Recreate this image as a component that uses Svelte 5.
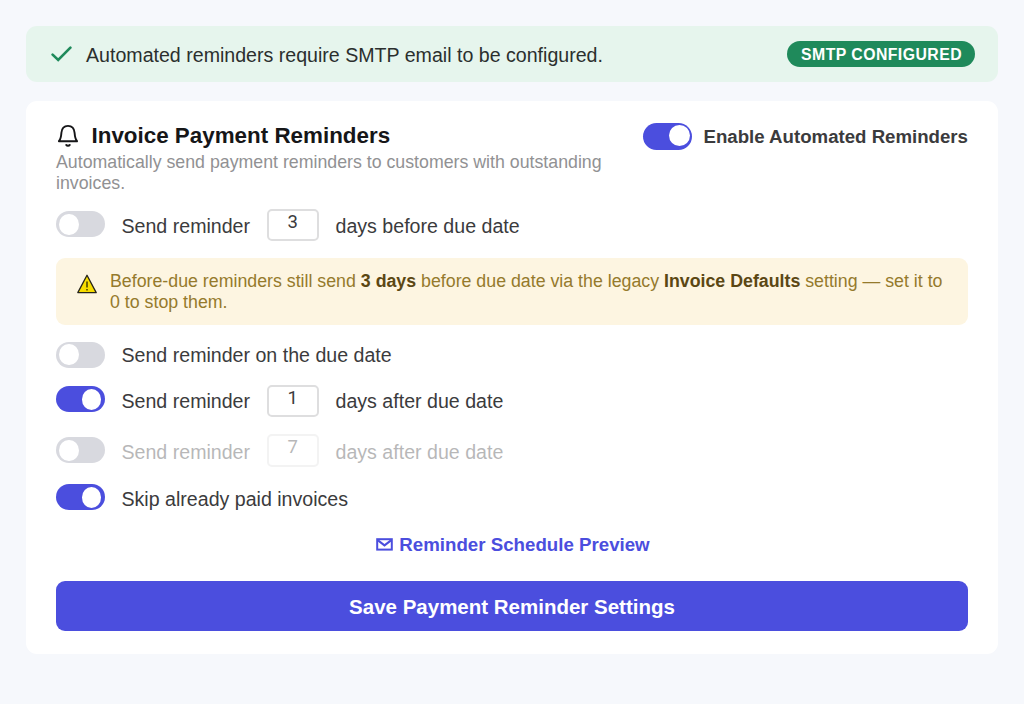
<script lang="ts">
    let rules = $state([
        { id: "before", on: false, label: "Send reminder", days: 3, suffix: "days before due date", muted: false },
        { id: "due", on: false, label: "Send reminder on the due date", days: null, suffix: "", muted: false },
        { id: "after-first", on: true, label: "Send reminder", days: 1, suffix: "days after due date", muted: false },
        { id: "after-second", on: false, label: "Send reminder", days: 7, suffix: "days after due date", muted: true },
        { id: "skip", on: true, label: "Skip already paid invoices", days: null, suffix: "", muted: false }
    ]);

    let enabled = $state(true);
</script>

<main>
    <div class="banner">
        <svg class="check" viewBox="0 0 22 16" width="22" height="16">
            <path d="M1.6 8.6 L7.2 14 L19.4 1.7" fill="none" stroke="#1f8a5b" stroke-width="2.6" stroke-linecap="round" />
        </svg>
        <span class="banner-text">Automated reminders require SMTP email to be configured.</span>
        <span class="badge">SMTP CONFIGURED</span>
    </div>

    <section class="card">
        <header>
            <div class="heading">
                <h1>
                    <svg viewBox="0 0 24 24" width="24" height="24" fill="none" stroke="#161618" stroke-width="1.9" stroke-linejoin="round" stroke-linecap="round">
                        <path d="M2.9 17.2 C5 14.8 5.1 12.8 5.4 8.8 C5.8 4 8 1.9 12 1.9 C16 1.9 18.2 4 18.6 8.8 C18.9 12.8 19 14.8 21.1 17.2 Z" />
                        <path d="M10.2 20.9 C11 22 13 22 13.8 20.9" />
                    </svg>
                    Invoice Payment Reminders
                </h1>
                <p>Automatically send payment reminders to customers with outstanding invoices.</p>
            </div>
            <div class="master">
                <button class="toggle" class:on={enabled} aria-label="Enable" onclick={() => {enabled = !enabled}}><i></i></button>
                <strong>Enable Automated Reminders</strong>
            </div>
        </header>

        {#each rules as rule (rule.id)}
            <div class="row {rule.id}" class:muted={rule.muted}>
                <button class="toggle" class:on={rule.on} aria-label={rule.label} onclick={() => {rule.on = !rule.on}}><i></i></button>
                <span class="label">{rule.label}</span>
                {#if rule.days !== null}
                    <span class="days">{rule.days}</span>
                    <span class="label suffix">{rule.suffix}</span>
                {/if}
            </div>
            {#if rule.id === "before"}
                <div class="warning">
                    <svg viewBox="0 0 20 20" width="20" height="20">
                        <path d="M10 1.2 L19.2 18.6 H0.8 Z" fill="#f7dc00" stroke="#26241a" stroke-width="1.3" stroke-linejoin="round" />
                        <path d="M10 7.6 V13.6 M10 14.9 V16.6" stroke="#3a3300" stroke-width="1.4" />
                    </svg>
                    <p>
                        Before-due reminders still send <b>3 days</b> before due date via the legacy
                        <b>Invoice Defaults</b> setting — set it to 0 to stop them.
                    </p>
                </div>
            {/if}
        {/each}

        <a class="preview" href="#preview">
            <svg viewBox="0 0 17 13" width="17" height="13" fill="none" stroke="#4b4ede" stroke-width="2">
                <rect x="1.2" y="1.2" width="14.6" height="10.4" />
                <path d="M2 2.4 L8.5 7.4 L15 2.4" />
            </svg>
            Reminder Schedule Preview
        </a>
        <button class="save">Save Payment Reminder Settings</button>
    </section>
</main>

<style>
    :global(body) {
        margin: 0;
        background: #f6f8fc;
    }

    main {
        box-sizing: border-box;
        height: 704px;
        padding: 26px;
        font-family: "Liberation Sans", Arial, sans-serif;
        color: #3b3b3d;
    }

    button {
        border: none;
        font-family: inherit;
        cursor: pointer;
    }

    .banner {
        display: flex;
        align-items: center;
        box-sizing: border-box;
        height: 56px;
        padding: 0 23px 0 25px;
        border-radius: 11px;
        background: #e6f5ed;
    }

    .banner-text {
        flex: 1;
        margin: 1px 0 0 13px;
        font-size: 19.6px;
        line-height: 22px;
        color: #2b2f2e;
    }

    .badge {
        padding: 1px 13px 0 14px;
        border-radius: 13px;
        background: #1f8a5b;
        color: #fff;
        font-size: 15.8px;
        font-weight: bold;
        line-height: 25px;
        letter-spacing: 0.45px;
    }

    .card {
        box-sizing: border-box;
        height: 553px;
        margin-top: 19px;
        padding: 22px 30px 0;
        border-radius: 11px;
        background: #fff;
    }

    header {
        display: flex;
        justify-content: space-between;
        height: 88px;
    }

    .heading {
        width: 570px;
    }

    h1 {
        display: flex;
        align-items: center;
        gap: 11.5px;
        height: 27px;
        margin: -1px 0 0;
        font-size: 22.4px;
        line-height: 27px;
        color: #161618;
    }

    .heading p {
        margin: 3px 0 0;
        font-size: 17.75px;
        line-height: 20.5px;
        color: #919193;
    }

    .master {
        display: flex;
        align-items: flex-start;
        gap: 12px;
        font-size: 18.65px;
    }

    .master strong {
        margin-top: 3px;
        line-height: 22px;
    }

    .toggle {
        display: flex;
        flex: none;
        box-sizing: border-box;
        width: 48.5px;
        height: 26px;
        padding: 3.3px 3.2px 0;
        border-radius: 14px;
        background: #d8d9df;
    }

    .toggle i {
        width: 19.5px;
        height: 21px;
        border-radius: 50%;
        background: #fff;
    }

    .toggle.on {
        justify-content: flex-end;
        background: #4b4ede;
    }

    .master .toggle {
        height: 26.5px;
        padding: 2px 1.5px 0;
    }

    .master .toggle i {
        width: 21px;
    }

    .row {
        display: flex;
        align-items: flex-start;
        height: 26px;
        font-size: 19.6px;
        line-height: 22px;
    }

    .label {
        margin: 4px 0 0 17px;
    }

    .suffix {
        margin-left: 16.5px;
    }

    .days {
        box-sizing: border-box;
        width: 52.5px;
        height: 32px;
        margin: -2px 0 0 16.5px;
        border: 2px solid #dededf;
        border-radius: 5px;
        font-family: Roboto, sans-serif;
        font-size: 18.5px;
        text-align: center;
    }

    .muted .label, .muted .days {
        opacity: 0.36;
    }

    .before {
        margin-bottom: 21px;
    }

    .due {
        margin: 17px 0 18px;
    }

    .due .toggle {
        padding-top: 1.7px;
    }

    .due .label {
        margin-top: 2px;
    }

    .after-first {
        margin-bottom: 25px;
    }

    .after-first .days {
        margin-top: -1.5px;
    }

    .after-second {
        margin-bottom: 20.5px;
    }

    .after-second .days {
        height: 33px;
        margin-top: -3.5px;
    }

    .warning {
        display: flex;
        box-sizing: border-box;
        height: 67px;
        padding: 13px 22px 0 21px;
        border-radius: 9px;
        background: #fdf5e1;
    }

    .warning svg {
        flex: none;
        margin: 3px 13px 0 0;
    }

    .warning p {
        margin: 0;
        font-size: 17.77px;
        line-height: 20.5px;
        color: #957a2c;
    }

    .warning b {
        color: #5b4713;
    }

    .preview {
        display: flex;
        align-items: center;
        justify-content: center;
        gap: 6px;
        height: 22px;
        margin: 24px -2px 25.5px 0;
        font-size: 18.7px;
        font-weight: bold;
        line-height: 22px;
        text-decoration: none;
        color: #4b4ede;
    }

    .save {
        display: block;
        width: 100%;
        height: 50px;
        padding: 1px 0 0;
        border-radius: 9px;
        background: #4b4ede;
        color: #fff;
        font-size: 20.5px;
        font-weight: bold;
    }
</style>
